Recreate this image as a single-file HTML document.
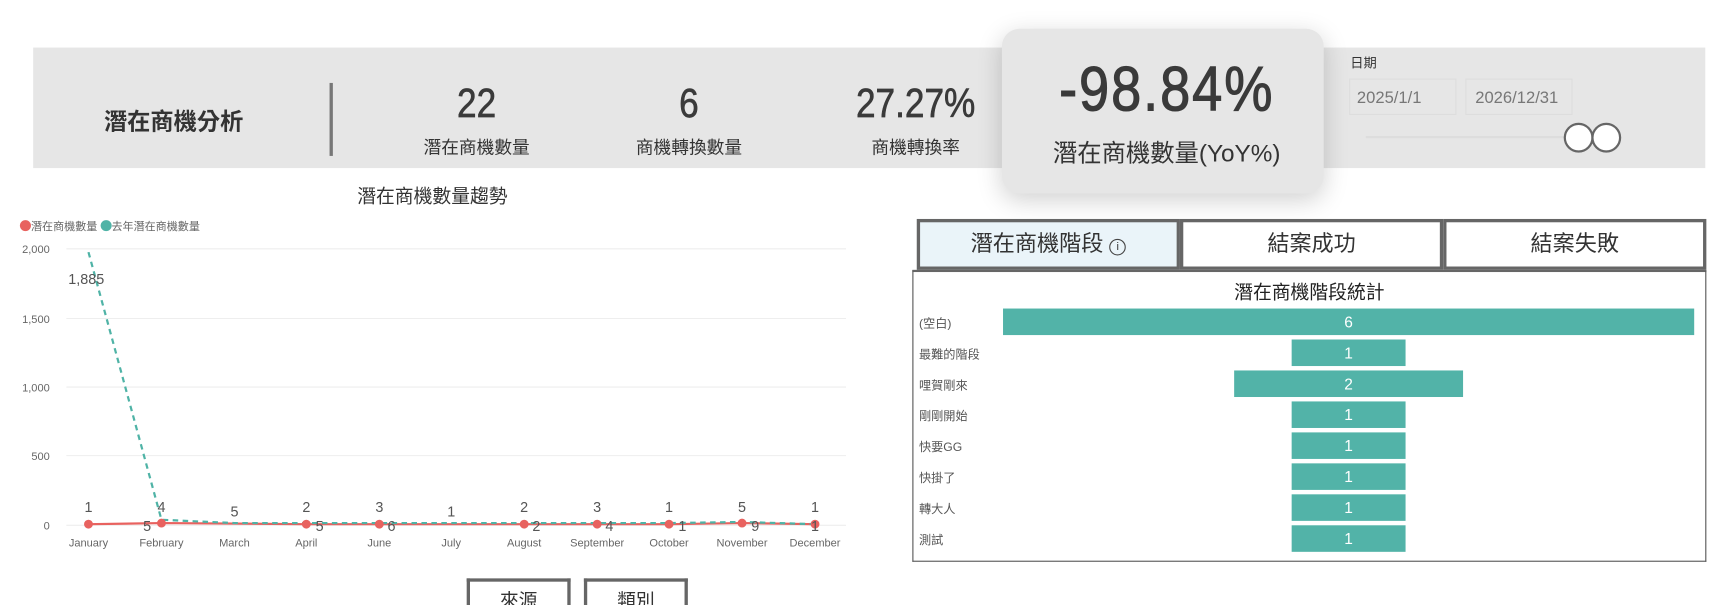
<!DOCTYPE html>
<html><head><meta charset="utf-8"><style>
html,body{margin:0;padding:0;background:#fff;overflow:hidden}
body{width:1734px;height:605px;position:relative}
#w{position:absolute;left:0;top:0;width:1568px;height:547px;transform:scale(1.10587);transform-origin:0 0;font-family:"Liberation Sans","Noto Sans CJK TC",sans-serif;color:#333}
.a{position:absolute}
.c{position:absolute;transform:translateX(-50%);white-space:nowrap;text-align:center}
.n{transform:translateX(-50%) scaleX(0.86);color:#3a3a3a;-webkit-text-stroke:0.6px #3a3a3a}
.tab{position:absolute;top:198px;height:40px;border:3px solid #666;background:#fff;font-size:20px;line-height:40px;text-align:center;color:#333}
.lbl{position:absolute;left:831px;font-size:11px;color:#555}
.bar{position:absolute;height:24px;background:#52b3a8;color:#fff;font-size:14px;line-height:24px;text-align:center}
</style></head><body><div id="w">
<div class="a" style="left:30px;top:43px;width:1512px;height:109px;background:#e6e6e6"></div>
<div class="c" style="left:157px;top:94px;font-size:21px;font-weight:bold">潛在商機分析</div>
<div class="a" style="left:298px;top:75px;width:3px;height:66px;background:#777"></div>
<div class="c n" style="left:431px;top:73px;font-size:37px">22</div>
<div class="c" style="left:431px;top:120px;font-size:16px">潛在商機數量</div>
<div class="c n" style="left:623px;top:73px;font-size:37px">6</div>
<div class="c" style="left:623px;top:120px;font-size:16px">商機轉換數量</div>
<div class="c n" style="left:828px;top:73px;font-size:37px">27.27%</div>
<div class="c" style="left:828px;top:120px;font-size:16px">商機轉換率</div>
<div class="a" style="left:906px;top:26px;width:291px;height:149px;border-radius:16px;background:#e6e6e6;box-shadow:0 6px 22px rgba(0,0,0,.18)"></div>
<div class="c n" style="left:1055px;top:48px;font-size:57px;letter-spacing:2px;-webkit-text-stroke:1px #3a3a3a">-98.84%</div>
<div class="c" style="left:1055px;top:121px;font-size:22px">潛在商機數量(YoY%)</div>
<div class="a" style="left:1221px;top:48px;font-size:12px">日期</div>
<div class="a" style="left:1220px;top:71px;width:97px;height:33px;border:1px solid #ddd;font-size:15px;color:#777;line-height:33px;padding-left:6px;box-sizing:border-box">2025/1/1</div>
<div class="a" style="left:1325px;top:71px;width:97px;height:33px;border:1px solid #ddd;font-size:15px;color:#777;line-height:33px;padding-left:8px;box-sizing:border-box">2026/12/31</div>
<div class="a" style="left:1235px;top:123px;width:190px;height:2px;background:#ddd"></div>
<div class="a" style="left:1414px;top:111px;width:23px;height:23px;border:2px solid #666;border-radius:50%;background:#fff"></div>
<div class="a" style="left:1439px;top:111px;width:23px;height:23px;border:2px solid #666;border-radius:50%;background:#fff"></div>

<div class="c" style="left:391px;top:163px;font-size:17px">潛在商機數量趨勢</div>
<div class="a" style="left:18px;top:196px;font-size:10px;color:#666"><span style="display:inline-block;width:10px;height:10px;border-radius:50%;background:#e8625f;vertical-align:-1px"></span>潛在商機數量 <span style="display:inline-block;width:10px;height:10px;border-radius:50%;background:#4fb3a6;vertical-align:-1px"></span>去年潛在商機數量</div>
<svg class="a" style="left:0;top:0" width="800" height="547" font-family="Liberation Sans,Noto Sans CJK TC,sans-serif">
<g stroke="#eee" stroke-width="1"><line x1="60" y1="225" x2="765" y2="225"/><line x1="60" y1="288" x2="765" y2="288"/><line x1="60" y1="350" x2="765" y2="350"/><line x1="60" y1="412" x2="765" y2="412"/><line x1="60" y1="475" x2="765" y2="475"/></g>
<g font-size="10" fill="#666" text-anchor="end"><text x="45" y="229">2,000</text><text x="45" y="292">1,500</text><text x="45" y="354">1,000</text><text x="45" y="416">500</text><text x="45" y="479">0</text></g>
<g font-size="10" fill="#666" text-anchor="middle"><text x="80" y="494">January</text><text x="146" y="494">February</text><text x="212" y="494">March</text><text x="277" y="494">April</text><text x="343" y="494">June</text><text x="408" y="494">July</text><text x="474" y="494">August</text><text x="540" y="494">September</text><text x="605" y="494">October</text><text x="671" y="494">November</text><text x="737" y="494">December</text></g>
<polyline points="80,474 146,473 277,474 343,474 474,474 540,474 605,474 671,473 737,474" fill="none" stroke="#e8625f" stroke-width="2"/>
<polyline points="80,228 146,470 212,473 277,473 343,473 408,473 474,473 540,473 605,473 671,472 737,474" fill="none" stroke="#4fb3a6" stroke-width="2" stroke-dasharray="5,4"/>
<g fill="#e8625f"><circle cx="80" cy="474" r="4"/><circle cx="146" cy="473" r="4"/><circle cx="277" cy="474" r="4"/><circle cx="343" cy="474" r="4"/><circle cx="474" cy="474" r="4"/><circle cx="540" cy="474" r="4"/><circle cx="605" cy="474" r="4"/><circle cx="671" cy="473" r="4"/><circle cx="737" cy="474" r="4"/></g>
<g font-size="13" fill="#555" text-anchor="middle"><text x="80" y="463">1</text><text x="146" y="463">4</text><text x="212" y="467">5</text><text x="277" y="463">2</text><text x="343" y="463">3</text><text x="408" y="467">1</text><text x="474" y="463">2</text><text x="540" y="463">3</text><text x="605" y="463">1</text><text x="671" y="463">5</text><text x="737" y="463">1</text>
<text x="78" y="257">1,885</text><text x="133" y="480">5</text><text x="289" y="480">5</text><text x="354" y="480">6</text><text x="485" y="480">2</text><text x="551" y="480">4</text><text x="617" y="480">1</text><text x="683" y="480">9</text><text x="737" y="480">1</text></g>
</svg>
<div class="a" style="left:422px;top:523px;width:88px;height:30px;border:3px solid #666;border-bottom:none;font-size:17px;text-align:center;line-height:36px">來源</div>
<div class="a" style="left:528px;top:523px;width:88px;height:30px;border:3px solid #666;border-bottom:none;font-size:17px;text-align:center;line-height:36px">類別</div>

<div class="tab" style="left:829px;width:232px;background:#eaf4f9">潛在商機階段 <span style="display:inline-block;width:13px;height:13px;border:1.5px solid #444;border-radius:50%;font-size:10px;line-height:13px;vertical-align:1px">i</span></div>
<div class="tab" style="left:1067px;width:232px">結案成功</div>
<div class="tab" style="left:1305px;width:232px">結案失敗</div>
<div class="a" style="left:825px;top:244px;width:716px;height:261px;border:1px solid #555;border-top:2px solid #666"></div>
<div class="c" style="left:1184px;top:250px;font-size:17px;color:#222">潛在商機階段統計</div>
<div class="lbl" style="top:284px">(空白)</div><div class="bar" style="left:907px;top:279px;width:625px">6</div>
<div class="lbl" style="top:312px">最難的階段</div><div class="bar" style="left:1168px;top:307px;width:103px">1</div>
<div class="lbl" style="top:340px">哩賀剛來</div><div class="bar" style="left:1116px;top:335px;width:207px">2</div>
<div class="lbl" style="top:368px">剛剛開始</div><div class="bar" style="left:1168px;top:363px;width:103px">1</div>
<div class="lbl" style="top:396px">快要GG</div><div class="bar" style="left:1168px;top:391px;width:103px">1</div>
<div class="lbl" style="top:424px">快掛了</div><div class="bar" style="left:1168px;top:419px;width:103px">1</div>
<div class="lbl" style="top:452px">轉大人</div><div class="bar" style="left:1168px;top:447px;width:103px">1</div>
<div class="lbl" style="top:480px">測試</div><div class="bar" style="left:1168px;top:475px;width:103px">1</div>
</div></body></html>
